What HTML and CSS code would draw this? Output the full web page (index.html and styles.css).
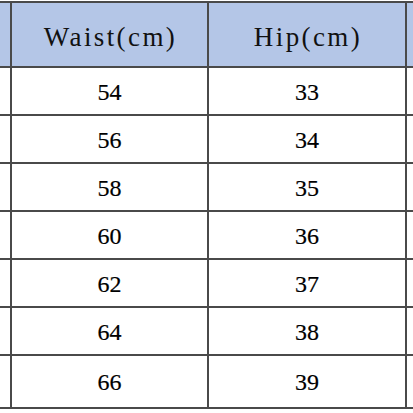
FILE: index.html
```html
<!DOCTYPE html>
<html>
<head>
<meta charset="utf-8">
<link rel="stylesheet" href="styles.css">
</head>
<body>
<div class="sheet">
  <div class="cell head"></div><div class="cell head label">Waist(cm)</div><div class="cell head label">Hip(cm)</div><div class="cell head"></div>
  <div class="cell"></div><div class="cell num">54</div><div class="cell num">33</div><div class="cell"></div>
  <div class="cell"></div><div class="cell num">56</div><div class="cell num">34</div><div class="cell"></div>
  <div class="cell"></div><div class="cell num">58</div><div class="cell num">35</div><div class="cell"></div>
  <div class="cell"></div><div class="cell num">60</div><div class="cell num">36</div><div class="cell"></div>
  <div class="cell"></div><div class="cell num">62</div><div class="cell num">37</div><div class="cell"></div>
  <div class="cell"></div><div class="cell num">64</div><div class="cell num">38</div><div class="cell"></div>
  <div class="cell"></div><div class="cell num">66</div><div class="cell num">39</div><div class="cell"></div>
</div>
</body>
</html>
```
FILE: styles.css
```css
html, body {
  margin: 0;
  padding: 0;
  background: #ffffff;
  overflow: hidden;
}
.sheet {
  margin-top: 1px;
  display: grid;
  grid-template-columns: 10px 195px 196px 1fr;
  grid-template-rows: 63px repeat(6, 46px) 51px;
  gap: 2px;
  padding: 2px 0;
  background: #4a4a4a;
}
.cell {
  background: #ffffff;
  display: flex;
  align-items: center;
  justify-content: center;
  color: #000;
}
.head {
  background: #b4c6e7;
}
.label {
  font-family: "Liberation Serif", "DejaVu Serif", serif;
  font-size: 27px;
  letter-spacing: 2.4px;
  padding-left: 2px;
  padding-top: 5px;
  color: #111;
}
.num {
  font-family: "Liberation Serif", "DejaVu Serif", serif;
  font-size: 24px;
  padding-top: 2px;
  -webkit-text-stroke: 0.2px #000;
}
```
